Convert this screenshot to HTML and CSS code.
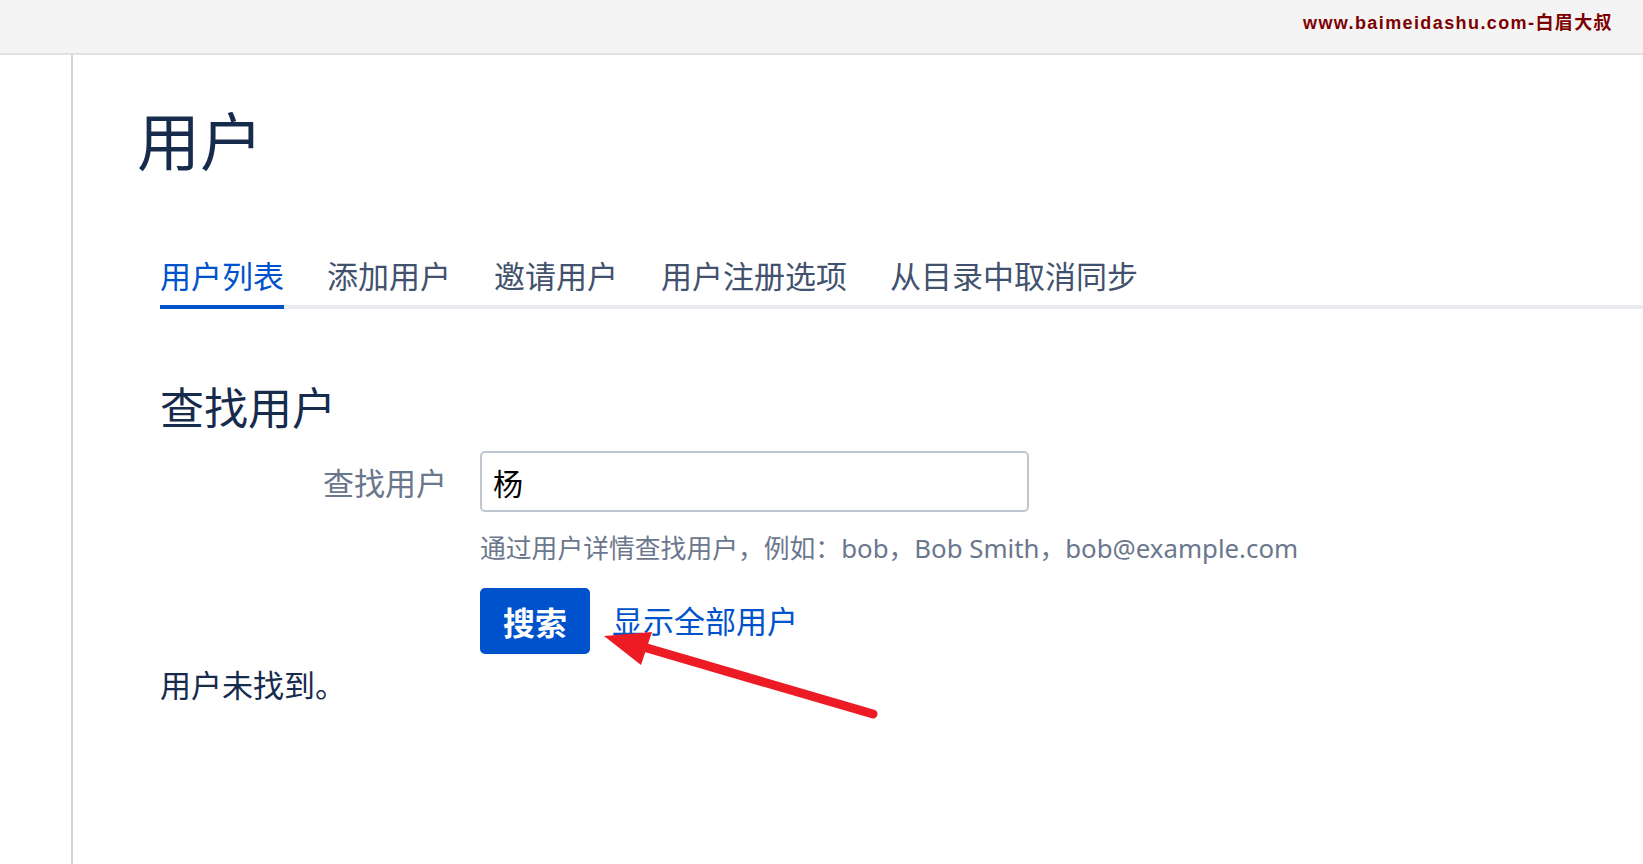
FILE: index.html
```html
<!DOCTYPE html>
<html lang="zh-CN">
<head>
    <meta charset="UTF-8">
    <meta name="viewport" content="width=device-width, initial-scale=1.0">
    <title>用户</title>
    <link rel="stylesheet" href="styles.css">
</head>
<body>
    <header class="top-bar">
        <span class="watermark">www.baimeidashu.com-白眉大叔</span>
    </header>

    <div class="layout">
        <aside class="sidebar"></aside>

        <main class="content">
            <h1 class="page-title">用户</h1>

            <div class="page-body">
                <nav class="tabs">
                    <a class="tab active" href="#">用户列表</a>
                    <a class="tab" href="#">添加用户</a>
                    <a class="tab" href="#">邀请用户</a>
                    <a class="tab" href="#">用户注册选项</a>
                    <a class="tab" href="#">从目录中取消同步</a>
                </nav>

                <h2 class="section-title">查找用户</h2>

                <form class="search-form">
                    <label class="field-label" for="userSearch">查找用户</label>
                    <div class="field">
                        <input type="text" id="userSearch" class="text-input" value="杨">
                        <p class="field-hint">通过用户详情查找用户，例如：bob，Bob Smith，bob@example.com</p>
                        <div class="actions">
                            <button type="submit" class="search-btn">搜索</button>
                            <a class="show-all" href="#">显示全部用户</a>
                        </div>
                    </div>
                </form>

                <p class="no-results">用户未找到。</p>
            </div>
        </main>
    </div>

    <!-- annotation arrow drawn over the page -->
    <svg class="annotation" width="1643" height="864" viewBox="0 0 1643 864">
        <line x1="873" y1="714" x2="640" y2="646" stroke="#ed1c24" stroke-width="9" stroke-linecap="round"/>
        <polygon points="604,636 652,632 641,665" fill="#ed1c24"/>
    </svg>
</body>
</html>
```

FILE: styles.css
```css
* {
    margin: 0;
    padding: 0;
    box-sizing: border-box;
}

html, body {
    height: 100%;
}

body {
    font-family: "Noto Sans", "Noto Sans CJK SC", sans-serif;
    background: #ffffff;
    color: #172b4d;
    overflow: hidden;
    position: relative;
}

a {
    text-decoration: none;
}

/* Top bar */
.top-bar {
    height: 55px;
    background: #f4f4f4;
    border-bottom: 2px solid #dfdfe5;
    display: flex;
    justify-content: flex-end;
    align-items: flex-start;
    padding: 13px 30px 0 0;
}

.watermark {
    font-family: "Liberation Sans", "Noto Sans CJK SC", sans-serif;
    font-size: 18px;
    font-weight: bold;
    line-height: 20px;
    letter-spacing: 1.4px;
    color: #7d0000;
}

/* Layout */
.layout {
    display: flex;
    height: calc(100% - 55px);
}

.sidebar {
    width: 73px;
    flex-shrink: 0;
    border-right: 2px solid #d3d3d3;
}

.content {
    flex: 1;
    padding: 54px 0 0 64px;
}

.page-title {
    font-size: 63px;
    font-weight: normal;
    line-height: 1;
    color: #172b4d;
}

.page-body {
    padding-left: 23px;
}

/* Tabs */
.tabs {
    display: flex;
    gap: 43px;
    margin-top: 89px;
    border-bottom: 4px solid #ebecf0;
}

.tab {
    font-size: 31px;
    line-height: 1;
    padding-bottom: 13px;
    margin-bottom: -4px;
    border-bottom: 4px solid transparent;
    color: #42526e;
}

.tab.active {
    color: #0052cc;
    border-bottom-color: #0052cc;
}

/* Find users */
.section-title {
    font-size: 44px;
    font-weight: normal;
    line-height: 1;
    margin-top: 77px;
    color: #172b4d;
}

.search-form {
    display: grid;
    grid-template-columns: 287px auto;
    column-gap: 33px;
    margin-top: 21px;
}

.field-label {
    font-size: 31px;
    line-height: 61px;
    height: 61px;
    padding-top: 2px;
    text-align: right;
    color: #6b778c;
}

.text-input {
    display: block;
    width: 549px;
    height: 61px;
    border: 2px solid #c1c7d0;
    border-radius: 5px;
    padding: 0 11px;
    font-family: "Noto Sans", "Noto Sans CJK SC", sans-serif;
    font-size: 30px;
    color: #000000;
    background: #ffffff;
    outline: none;
}

.field-hint {
    font-size: 25.8px;
    line-height: 26px;
    margin-top: 23px;
    color: #6b778c;
}

.actions {
    display: flex;
    align-items: center;
    gap: 22px;
    margin-top: 27px;
}

.search-btn {
    width: 110px;
    height: 66px;
    border: none;
    border-radius: 5px;
    background: #0052cc;
    color: #ffffff;
    font-family: "Noto Sans", "Noto Sans CJK SC", sans-serif;
    font-size: 32px;
    font-weight: bold;
    cursor: pointer;
}

.show-all {
    font-size: 31px;
    line-height: 1;
    color: #0052cc;
}

.no-results {
    font-size: 31px;
    line-height: 1;
    margin-top: 16px;
    color: #172b4d;
}

/* Red annotation arrow */
.annotation {
    position: absolute;
    top: 0;
    left: 0;
    pointer-events: none;
}
```
